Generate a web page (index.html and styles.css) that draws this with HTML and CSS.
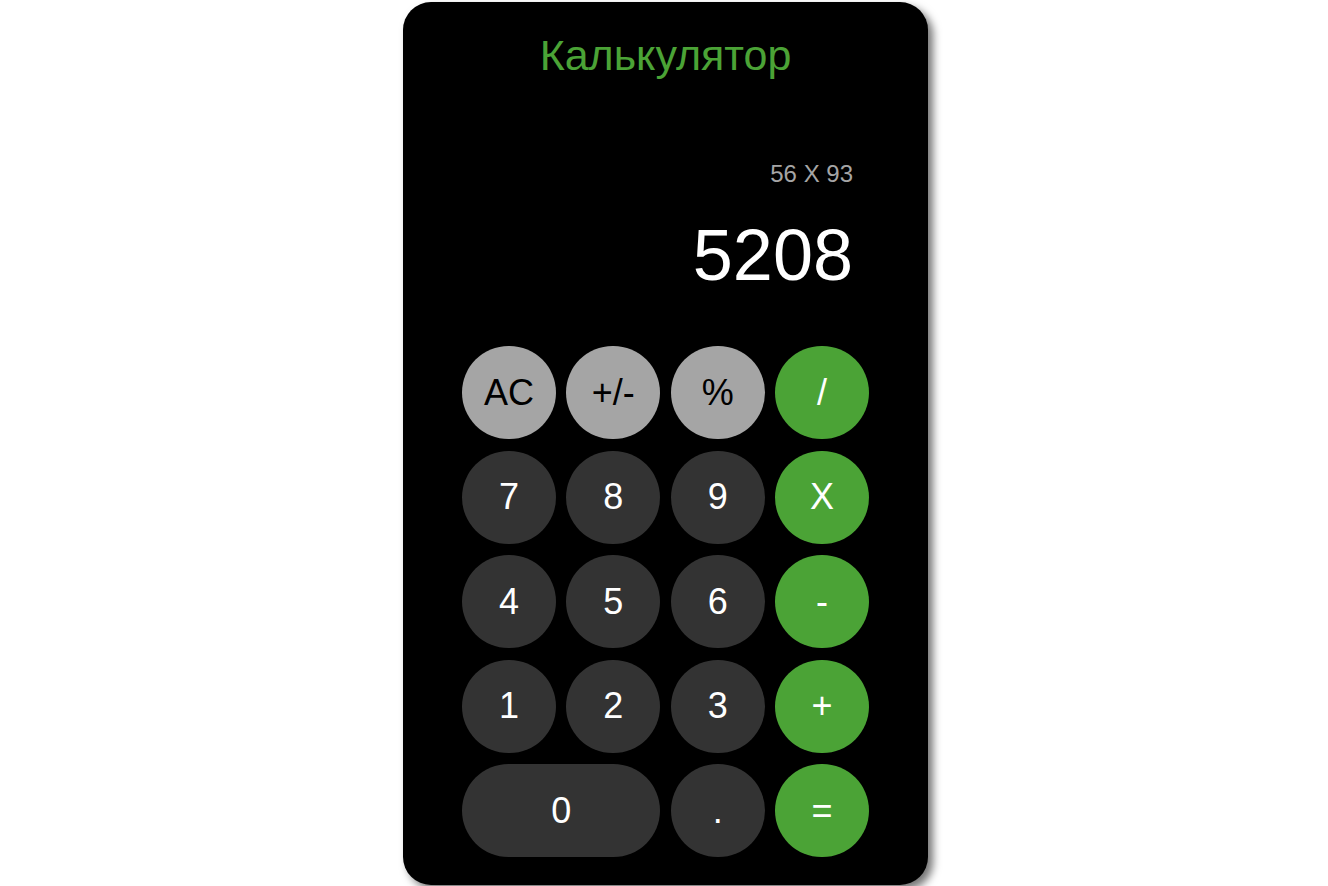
FILE: index.html
```html
<!DOCTYPE html>
<html lang="ru">
<head>
<meta charset="utf-8">
<title>Калькулятор</title>
<link rel="stylesheet" href="styles.css">
</head>
<body>
<div class="calculator">
  <h1 class="title">Калькулятор</h1>
  <div class="display">
    <div class="expression">56 X 93</div>
    <div class="result">5208</div>
  </div>
  <div class="keys">
    <button class="key key-light">AC</button>
    <button class="key key-light">+/-</button>
    <button class="key key-light">%</button>
    <button class="key key-op">/</button>
    <button class="key">7</button>
    <button class="key">8</button>
    <button class="key">9</button>
    <button class="key key-op">X</button>
    <button class="key">4</button>
    <button class="key">5</button>
    <button class="key">6</button>
    <button class="key key-op">-</button>
    <button class="key">1</button>
    <button class="key">2</button>
    <button class="key">3</button>
    <button class="key key-op">+</button>
    <button class="key key-zero">0</button>
    <button class="key">.</button>
    <button class="key key-op">=</button>
  </div>
</div>
</body>
</html>
```
FILE: styles.css
```css
html, body {
  margin: 0;
  padding: 0;
  background: #ffffff;
  height: 100%;
  overflow: hidden;
}
body {
  display: flex;
  justify-content: center;
  align-items: flex-start;
  font-family: "Liberation Sans", Arial, sans-serif;
}
.calculator {
  box-sizing: border-box;
  width: 525px;
  height: 883px;
  margin-top: 2px;
  margin-left: 3px;
  padding: 27px 59px 0 59px;
  background: #000000;
  border-radius: 28px;
  box-shadow: 5px 5px 8px rgba(0, 0, 0, 0.55);
  display: flex;
  flex-direction: column;
}
.title {
  margin: 0;
  font-weight: normal;
  font-size: 43px;
  line-height: 52px;
  text-align: center;
  color: #4ba336;
}
.display {
  margin-top: 79px;
  padding-right: 16px;
  text-align: right;
}
.expression {
  font-size: 24px;
  line-height: 28px;
  color: #a5a5a5;
}
.result {
  margin-top: 26px;
  font-size: 72px;
  line-height: 83px;
  color: #ffffff;
}
.keys {
  margin-top: 49px;
  display: grid;
  grid-template-columns: repeat(4, 94px);
  grid-auto-rows: 93px;
  column-gap: 10.33px;
  row-gap: 11.5px;
}
.key {
  border: none;
  padding: 0;
  margin: 0;
  border-radius: 47px;
  background: #333333;
  color: #ffffff;
  font-family: "Liberation Sans", Arial, sans-serif;
  font-size: 36px;
  display: flex;
  align-items: center;
  justify-content: center;
}
.key-light {
  background: #a5a5a5;
  color: #000000;
}
.key-op {
  background: #4ba336;
  color: #ffffff;
}
.key-zero {
  grid-column: span 2;
}
```
